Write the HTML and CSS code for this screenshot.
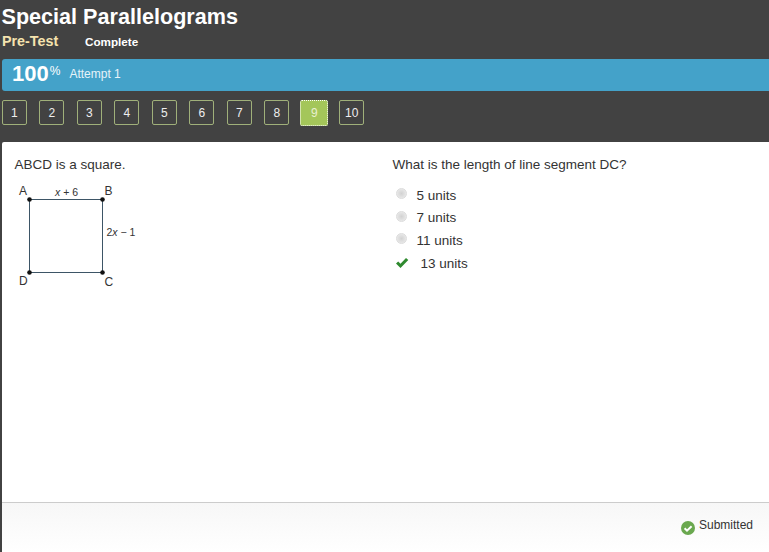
FILE: index.html
```html
<!DOCTYPE html>
<html lang="en">

<head>
  <meta charset="UTF-8">
  <title>Special Parallelograms</title>
  <link rel="stylesheet" href="styles.css">
</head>

<body>
  <div class="header">
    <h1>Special Parallelograms</h1>
    <div class="subtitle">
      <span class="activity">Pre-Test</span>
      <span class="status">Complete</span>
    </div>
    <div class="score-bar">
      <span class="score">100</span><span class="percent">%</span>
      <span class="attempt">Attempt 1</span>
    </div>
    <div class="pager">
      <button type="button" class="page-btn">1</button>
      <button type="button" class="page-btn">2</button>
      <button type="button" class="page-btn">3</button>
      <button type="button" class="page-btn">4</button>
      <button type="button" class="page-btn">5</button>
      <button type="button" class="page-btn">6</button>
      <button type="button" class="page-btn">7</button>
      <button type="button" class="page-btn">8</button>
      <button type="button" class="page-btn current">9</button>
      <button type="button" class="page-btn">10</button>
    </div>
  </div>

  <div class="content">
    <div class="question">
      <div class="left-col">
        <p class="prompt">ABCD is a square.</p>
        <svg class="figure" width="130" height="112" viewBox="0 0 130 112">
          <rect x="15.5" y="14.5" width="73" height="73" fill="none" stroke="#3d5566" stroke-width="1"/>
          <circle cx="15.5" cy="14.5" r="2.3" fill="#111"/>
          <circle cx="88.5" cy="14.5" r="2.3" fill="#111"/>
          <circle cx="15.5" cy="87.5" r="2.3" fill="#111"/>
          <circle cx="88.5" cy="87.5" r="2.3" fill="#111"/>
          <text x="5" y="10" class="vertex">A</text>
          <text x="90.5" y="10" class="vertex">B</text>
          <text x="90.5" y="101" class="vertex">C</text>
          <text x="5" y="100" class="vertex">D</text>
          <text x="41" y="11" class="side"><tspan font-style="italic">x</tspan> + 6</text>
          <text x="92.5" y="51" class="side">2<tspan font-style="italic">x</tspan> − 1</text>
        </svg>
      </div>
      <div class="right-col">
        <p class="prompt">What is the length of line segment DC?</p>
        <ul class="choices">
          <li class="choice"><span class="radio"></span>5 units</li>
          <li class="choice"><span class="radio"></span>7 units</li>
          <li class="choice"><span class="radio"></span>11 units</li>
          <li class="choice correct">
            <svg class="check" width="14" height="12" viewBox="0 0 14 12">
              <path d="M1 6.5 L3.2 4.4 L5.5 6.8 L11 1 L13.3 3.1 L5.5 11 Z" fill="#2f8a2f"/>
            </svg>13 units
          </li>
        </ul>
      </div>
    </div>
    <div class="footer">
      <svg class="submitted-icon" width="14" height="14" viewBox="0 0 14 14">
        <circle cx="7" cy="7" r="7" fill="#6aa84f"/>
        <path d="M3.6 7.2 L6 9.6 L10.6 5.2" fill="none" stroke="#fff" stroke-width="2"/>
      </svg>
      <span class="submitted">Submitted</span>
    </div>
  </div>
</body>

</html>
```

FILE: styles.css
```css
* {
  box-sizing: border-box;
}

html,
body {
  height: 100%;
}

body {
  margin: 0;
  display: flex;
  flex-direction: column;
  height: 552px;
  overflow: hidden;
  background: #424242;
  font-family: "Liberation Sans", Arial, sans-serif;
  color: #333;
}

.header {
  height: 142px;
  padding: 5px 0 0 2px;
  flex-shrink: 0;
}

h1 {
  margin: 0 0 0 -0.5px;
  font-size: 21.6px;
  line-height: 24px;
  font-weight: bold;
  color: #fff;
}

.subtitle {
  display: flex;
  align-items: baseline;
  margin-top: 4px;
  line-height: 17px;
}

.activity {
  font-size: 14.3px;
  font-weight: bold;
  color: #f5e3ae;
  width: 83px;
}

.status {
  font-size: 11.7px;
  font-weight: bold;
  color: #fff;
}

.score-bar {
  display: flex;
  align-items: flex-start;
  height: 32px;
  margin-top: 9px;
  padding-left: 10px;
  background: #44a2c9;
  border-radius: 3px 0 0 3px;
  color: #fff;
}

.score {
  font-size: 22px;
  font-weight: bold;
  line-height: 29px;
}

.percent {
  font-size: 12px;
  line-height: 12px;
  margin-top: 6px;
  margin-left: 1px;
}

.attempt {
  font-size: 12px;
  line-height: 16px;
  margin-top: 7px;
  margin-left: 9px;
  color: #e6f3f9;
}

.pager {
  display: flex;
  gap: 12.5px;
  margin-top: 9px;
  margin-left: -0.25px;
}

.page-btn {
  width: 25px;
  height: 25px;
  padding: 0;
  background: none;
  border: 1px solid #a0b07a;
  border-radius: 2px;
  color: #eee;
  font-family: inherit;
  font-size: 12px;
}

.page-btn.current {
  width: 28px;
  height: 26px;
  margin-left: -1.5px;
  margin-right: -1.5px;
  background: #a4c65a;
  border: 1px dotted #fff;
  color: #e8f0d0;
}

.content {
  flex: 1;
  display: flex;
  flex-direction: column;
  margin-left: 2px;
  background: #fff;
  border-radius: 2px 0 0 0;
}

.question {
  flex: 1;
  display: flex;
  padding-top: 15px;
}

.left-col {
  width: 390.5px;
  padding-left: 12.5px;
}

.prompt {
  margin: 0;
  font-size: 13.5px;
  line-height: 16px;
}

.figure {
  display: block;
  margin-top: 12px;
  margin-left: -0.5px;
}

.vertex {
  font-size: 12px;
  fill: #333;
}

.side {
  font-size: 10.5px;
  fill: #333;
}

.choices {
  list-style: none;
  margin: 11px 0 0;
  padding: 0;
}

.choice {
  display: flex;
  align-items: center;
  height: 22.5px;
  font-size: 13.5px;
}

.radio {
  width: 11px;
  height: 11px;
  margin-left: 3px;
  margin-right: 10px;
  margin-bottom: 3px;
  border: 1px solid #dcdcdc;
  border-radius: 50%;
  background: radial-gradient(#d2d2d2 0, #e2e2e2 55%, #f4f4f4 100%);
}

.check {
  margin-left: 2px;
  margin-right: 12px;
}

.correct {
  padding-top: 1px;
}

.footer {
  display: flex;
  align-items: center;
  justify-content: flex-end;
  height: 50px;
  padding: 0 16px 5px 0;
  border-top: 1px solid #ccc;
  background: linear-gradient(#f7f7f7, #fff);
}

.submitted-icon {
  margin-top: 5px;
  margin-right: 4px;
}

.submitted {
  font-size: 12px;
}
```
